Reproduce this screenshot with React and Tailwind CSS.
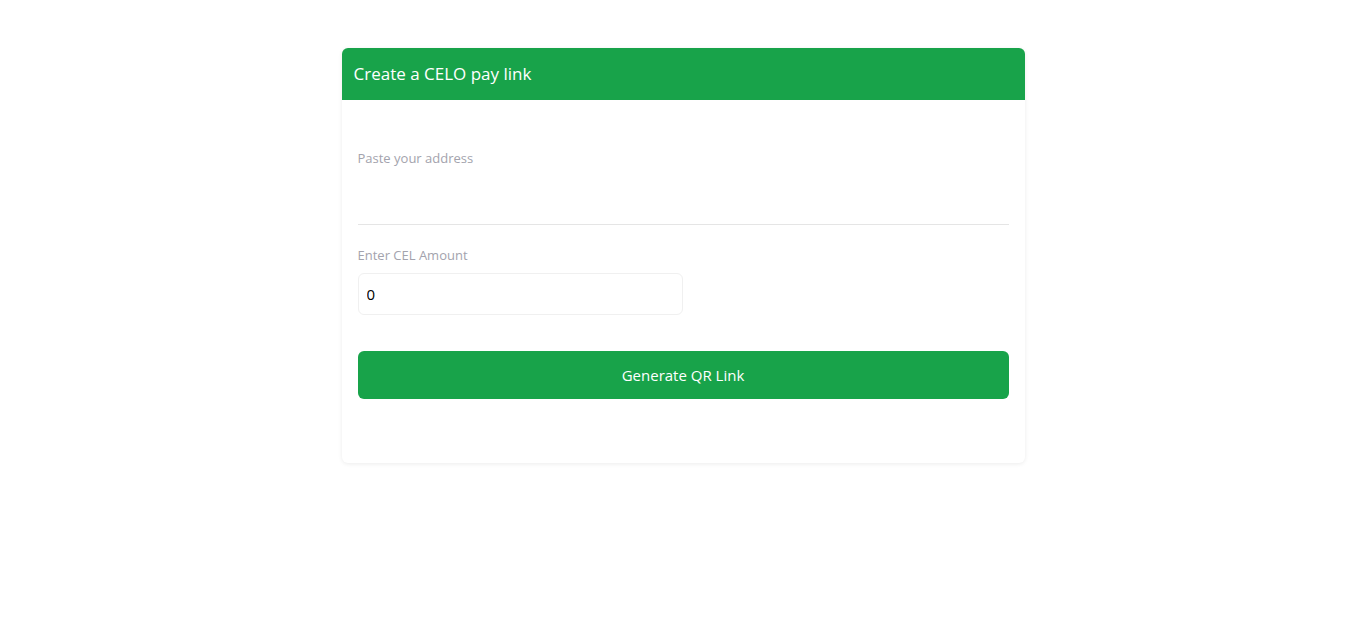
import { useState } from 'react';

export default function App() {
    const [address, setAddress] = useState('');
    const [amount, setAmount] = useState('0');

    return (
        <div className="min-h-screen bg-white flex justify-center items-start pt-12" style={{ fontFamily: "'Open Sans', 'Noto Sans', sans-serif" }}>
            <div className="w-1/2 bg-white rounded-md shadow-[0_1px_4px_rgba(0,0,0,0.08)] overflow-hidden">
                {/* Header */}
                <div className="h-[52px] bg-[#18a34a] flex items-center px-3">
                    <h1 className="text-[17px] text-white">Create a CELO pay link</h1>
                </div>

                {/* Body */}
                <div className="px-4 pt-12 pb-16">
                    <label className="block text-[13px] leading-5 text-[#a3a3ad]">Paste your address</label>
                    <input
                        type="text"
                        value={address}
                        onChange={(e) => setAddress(e.target.value)}
                        className="w-full h-[57px] border-b border-[#e5e5e5] outline-none bg-transparent"
                    />

                    <label className="block mt-5 text-[13px] leading-5 text-[#a3a3ad]">Enter CEL Amount</label>
                    <input
                        type="number"
                        value={amount}
                        onChange={(e) => setAmount(e.target.value)}
                        className="mt-2 w-1/2 h-[42px] px-2 border border-[#f0f0f0] rounded-md outline-none text-[15px] text-black"
                    />

                    <button className="mt-9 w-full h-12 bg-[#18a34a] text-white text-[15px] rounded-md">
                        Generate QR Link
                    </button>
                </div>
            </div>
        </div>
    );
}
